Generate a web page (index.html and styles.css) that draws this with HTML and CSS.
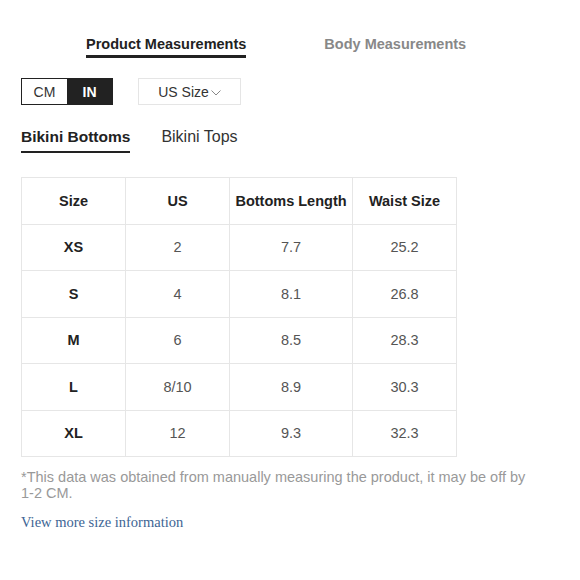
FILE: index.html
```html
<!DOCTYPE html>
<html>
<head>
<meta charset="utf-8">
<link rel="stylesheet" href="styles.css">
</head>
<body>
<div class="page">
  <div class="tabs">
    <div class="tab active">Product Measurements</div>
    <div class="tab">Body Measurements</div>
  </div>
  <div class="controls">
    <div class="unit">
      <span class="unit-opt">CM</span>
      <span class="unit-opt on">IN</span>
    </div>
    <div class="select">US Size<svg class="caret" width="10" height="6" viewBox="0 0 10 6"><path d="M0.5 0.5 L5 5 L9.5 0.5" fill="none" stroke="#888" stroke-width="1"/></svg></div>
  </div>
  <div class="subtabs">
    <div class="subtab active">Bikini Bottoms</div>
    <div class="subtab">Bikini Tops</div>
  </div>
  <table class="size-table">
    <thead>
      <tr><th>Size</th><th>US</th><th>Bottoms Length</th><th>Waist Size</th></tr>
    </thead>
    <tbody>
      <tr><td class="sz">XS</td><td>2</td><td>7.7</td><td>25.2</td></tr>
      <tr><td class="sz">S</td><td>4</td><td>8.1</td><td>26.8</td></tr>
      <tr><td class="sz">M</td><td>6</td><td>8.5</td><td>28.3</td></tr>
      <tr><td class="sz">L</td><td>8/10</td><td>8.9</td><td>30.3</td></tr>
      <tr><td class="sz">XL</td><td>12</td><td>9.3</td><td>32.3</td></tr>
    </tbody>
  </table>
  <p class="note">*This data was obtained from manually measuring the product, it may be off by 1-2 CM.</p>
  <a class="more" href="#">View more size information</a>
</div>
</body>
</html>
```

FILE: styles.css
```css
html, body {
  margin: 0;
  padding: 0;
  background: #fff;
}
body {
  font-family: "Liberation Sans", Arial, sans-serif;
  color: #222;
}
.page {
  width: 580px;
  height: 580px;
  box-sizing: border-box;
  padding: 36px 0 0 21px;
}
.tabs {
  display: flex;
  gap: 78px;
  padding-left: 65px;
}
.tab {
  font-size: 14.5px;
  font-weight: bold;
  color: #888;
  padding-bottom: 2px;
  border-bottom: 3px solid transparent;
  line-height: 17px;
}
.tab.active {
  color: #222;
  border-bottom-color: #222;
}
.controls {
  display: flex;
  gap: 25px;
  margin-top: 20px;
}
.unit {
  display: flex;
  border: 1px solid #222;
  height: 25px;
}
.unit-opt {
  width: 45px;
  display: flex;
  align-items: center;
  justify-content: center;
  font-size: 14px;
  color: #333;
}
.unit-opt.on {
  background: #222;
  color: #fff;
  font-weight: bold;
}
.select {
  width: 101px;
  height: 25px;
  border: 1px solid #e5e5e5;
  display: flex;
  align-items: center;
  justify-content: center;
  font-size: 14px;
  color: #333;
  gap: 2px;
}
.caret {
  margin-top: 3px;
}
.subtabs {
  display: flex;
  gap: 31px;
  margin-top: 23px;
}
.subtab {
  font-size: 16px;
  color: #333;
  line-height: 18px;
  padding-bottom: 5px;
  border-bottom: 2px solid transparent;
}
.subtab.active {
  color: #222;
  font-weight: bold;
  font-size: 15.5px;
  border-bottom-color: #222;
}
.size-table {
  margin-top: 24px;
  border-collapse: collapse;
  font-size: 14.5px;
}
.size-table th, .size-table td {
  border: 1px solid #e6e6e6;
  height: 45.5px;
  padding: 0;
  text-align: center;
  color: #555;
}
.size-table th {
  color: #222;
  font-weight: bold;
}
.size-table th:nth-child(1), .size-table td:nth-child(1) { width: 103px; }
.size-table th:nth-child(2), .size-table td:nth-child(2) { width: 103px; }
.size-table th:nth-child(3), .size-table td:nth-child(3) { width: 122px; }
.size-table th:nth-child(4), .size-table td:nth-child(4) { width: 103px; }
.size-table td.sz {
  font-weight: bold;
  color: #222;
}
.note {
  margin: 12px 0 0;
  width: 512px;
  font-size: 14.5px;
  line-height: 16px;
  color: #999;
}
.more {
  display: block;
  margin-top: 13px;
  font-family: "Liberation Serif", "Times New Roman", serif;
  font-size: 14.5px;
  color: #3d6594;
  text-decoration: none;
}
```
